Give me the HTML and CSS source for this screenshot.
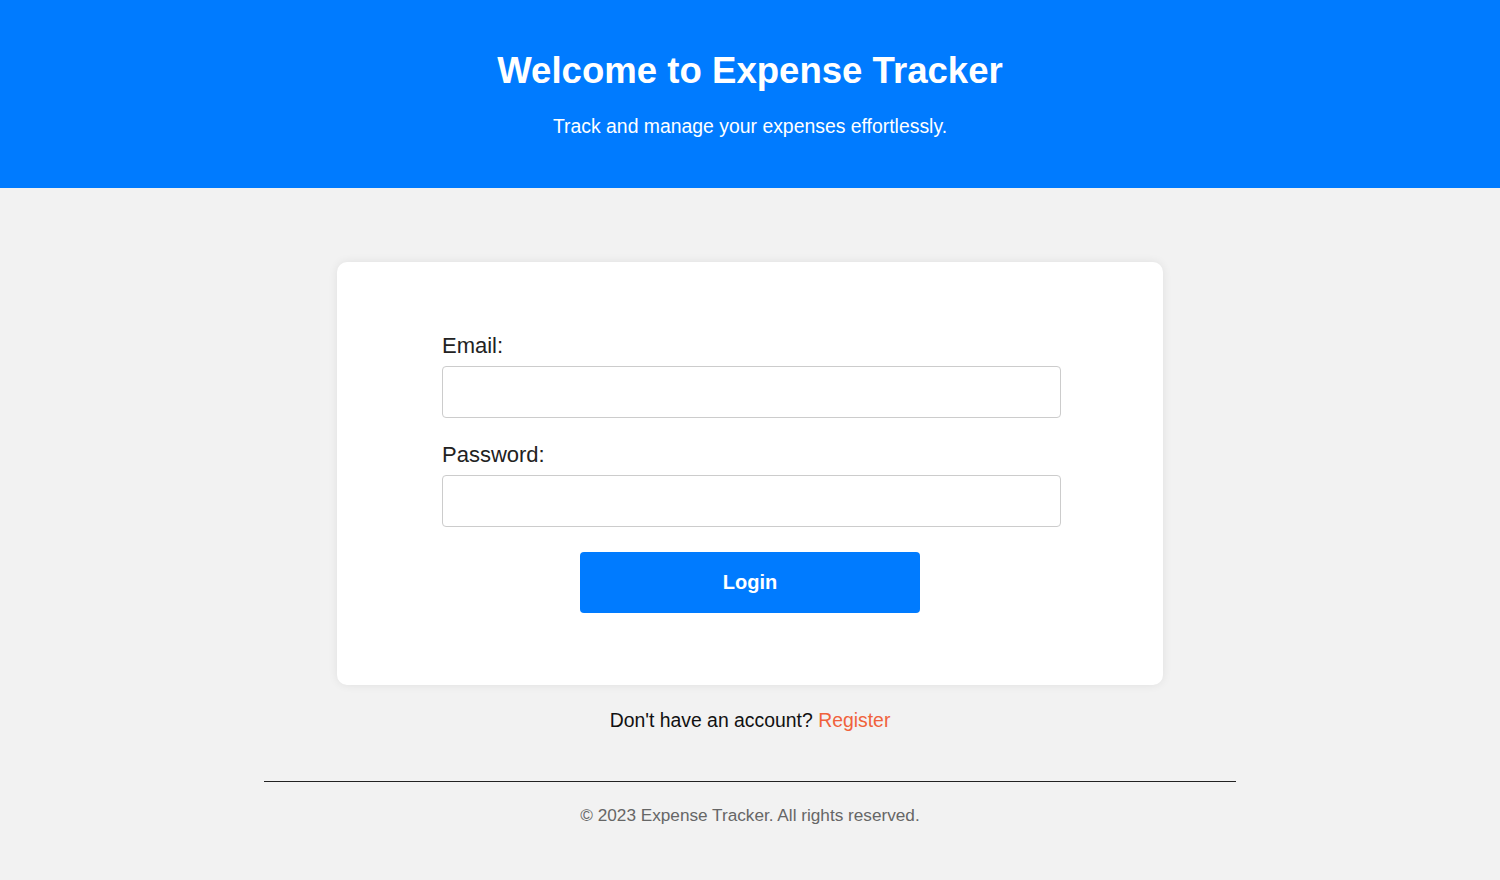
FILE: index.html
```html
<!DOCTYPE html>
<html lang="en">
<head>
<meta charset="utf-8">
<title>Expense Tracker - Login</title>
<link rel="stylesheet" href="styles.css">
</head>
<body>
<header class="hero">
  <h1 class="hero-title">Welcome to Expense Tracker</h1>
  <p class="hero-sub">Track and manage your expenses effortlessly.</p>
</header>
<main class="main">
  <section class="card">
    <form class="login-form">
      <label class="field-label" for="email">Email:</label>
      <input class="field-input" type="email" id="email">
      <label class="field-label" for="password">Password:</label>
      <input class="field-input" type="password" id="password">
      <button class="login-btn" type="button">Login</button>
    </form>
  </section>
  <p class="register">Don't have an account? <a class="register-link" href="#">Register</a></p>
</main>
<footer class="footer">
  <p class="footer-text">© 2023 Expense Tracker. All rights reserved.</p>
</footer>
</body>
</html>
```
FILE: styles.css
```css
* { box-sizing: border-box; }
html, body { margin: 0; padding: 0; }
body {
  background: #f2f2f2;
  font-family: "Liberation Sans", Arial, sans-serif;
  color: #222;
}
.hero {
  background: #007bff;
  color: #fff;
  text-align: center;
  height: 188px;
  padding-top: 49px;
}
.hero-title {
  margin: 0;
  font-size: 36.6px;
  font-weight: bold;
  line-height: 44px;
}
.hero-sub {
  margin: 21px 0 0;
  font-size: 19.4px;
  line-height: 24px;
}
.main {
  display: flex;
  flex-direction: column;
  align-items: center;
  padding-top: 74px;
}
.card {
  width: 826px;
  height: 423px;
  background: #fff;
  border-radius: 10px;
  box-shadow: 0 0 10px rgba(0,0,0,0.08);
  padding: 70px 0 0 105px;
}
.login-form {
  width: 619px;
  display: flex;
  flex-direction: column;
}
.field-label {
  font-size: 22px;
  line-height: 28px;
  color: #222;
  margin-bottom: 6px;
}
.field-input {
  height: 52px;
  border: 1px solid #ccc;
  border-radius: 4px;
  background: #fff;
  margin-bottom: 23px;
  font-size: 16px;
}
.login-btn {
  align-self: flex-start;
  margin-left: 138px;
  width: 340px;
  height: 61px;
  margin-top: 2px;
  background: #007bff;
  border: none;
  border-radius: 4px;
  color: #fff;
  font-family: "Liberation Sans", Arial, sans-serif;
  font-size: 20px;
  font-weight: bold;
}
.register {
  margin: 23px 0 0;
  font-size: 19.4px;
  line-height: 24px;
  color: #111;
}
.register-link {
  color: #f0623c;
  text-decoration: none;
}
.footer {
  width: 972px;
  margin: 49px auto 0;
  border-top: 1px solid #222;
  text-align: center;
}
.footer-text {
  margin: 22px 0 0;
  font-size: 17.2px;
  line-height: 22px;
  color: #666;
}
```
